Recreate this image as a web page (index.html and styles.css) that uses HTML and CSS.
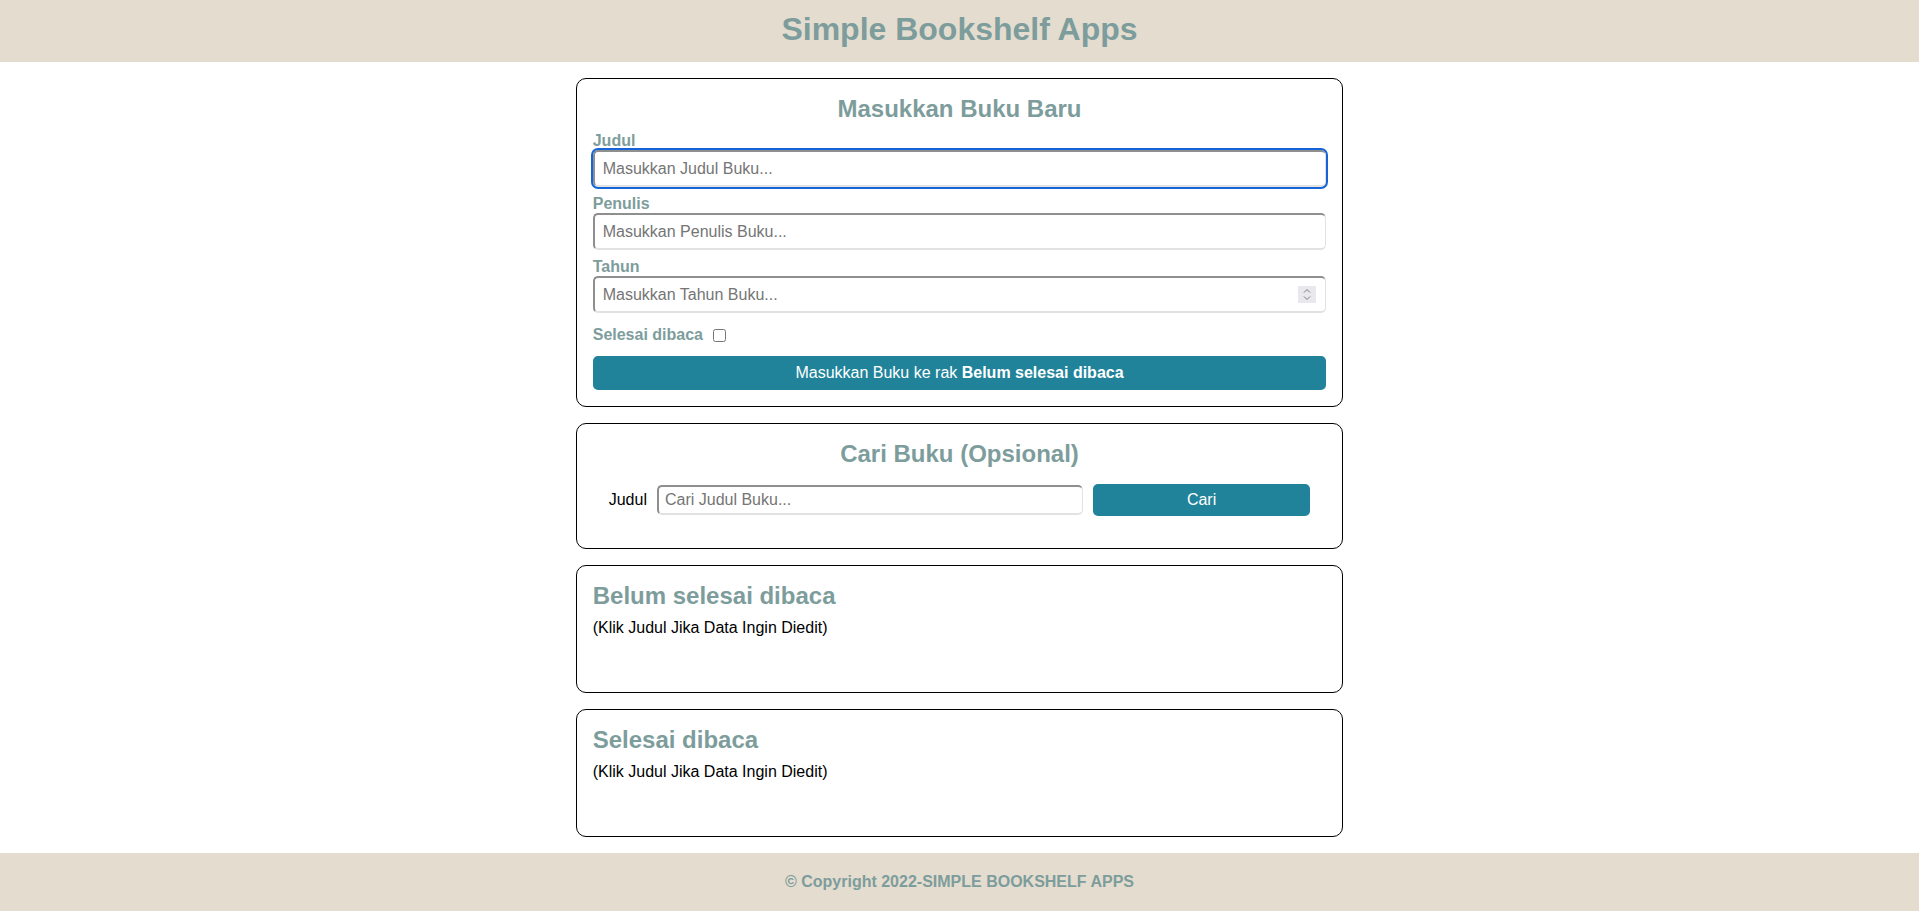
FILE: index.html
```html
<!DOCTYPE html>
<html lang="id">
<head>
<meta charset="utf-8">
<title>Simple Bookshelf Apps</title>
<link rel="stylesheet" href="styles.css">
</head>
<body>
<header class="app-header">
  <h1 class="app-title">Simple Bookshelf Apps</h1>
</header>
<main class="main">
  <section class="card">
    <h2 class="card-title card-title-center">Masukkan Buku Baru</h2>
    <form class="input-form" onsubmit="return false">
      <div class="field">
        <label class="field-label" for="inputJudul">Judul</label>
        <input class="field-input is-focused" id="inputJudul" type="text" placeholder="Masukkan Judul Buku...">
      </div>
      <div class="field">
        <label class="field-label" for="inputPenulis">Penulis</label>
        <input class="field-input" id="inputPenulis" type="text" placeholder="Masukkan Penulis Buku...">
      </div>
      <div class="field">
        <label class="field-label" for="inputTahun">Tahun</label>
        <div class="number-wrap">
          <input class="field-input" id="inputTahun" type="number" placeholder="Masukkan Tahun Buku...">
          <span class="spinner" aria-hidden="true">
            <svg width="18" height="17" viewBox="0 0 18 17">
              <rect width="18" height="17" fill="#e9e9ed"/>
              <path d="M6 6.5 L9 3.5 L12 6.5" fill="none" stroke="#7a7a80" stroke-width="1"/>
              <path d="M6 10.5 L9 13.5 L12 10.5" fill="none" stroke="#7a7a80" stroke-width="1"/>
            </svg>
          </span>
        </div>
      </div>
      <div class="check-row">
        <label class="field-label check-label" for="inputSelesai">Selesai dibaca</label>
        <input class="check-input" id="inputSelesai" type="checkbox">
      </div>
      <button class="btn btn-submit" type="submit">Masukkan Buku ke rak <b>Belum selesai dibaca</b></button>
    </form>
  </section>

  <section class="card">
    <h2 class="card-title card-title-center">Cari Buku (Opsional)</h2>
    <form class="search-form" onsubmit="return false">
      <label class="search-label" for="searchJudul">Judul</label>
      <input class="search-input" id="searchJudul" type="text" placeholder="Cari Judul Buku...">
      <button class="btn btn-search" type="submit">Cari</button>
    </form>
  </section>

  <section class="card">
    <h2 class="card-title">Belum selesai dibaca</h2>
    <p class="shelf-hint">(Klik Judul Jika Data Ingin Diedit)</p>
    <div class="book-list"></div>
  </section>

  <section class="card">
    <h2 class="card-title">Selesai dibaca</h2>
    <p class="shelf-hint">(Klik Judul Jika Data Ingin Diedit)</p>
    <div class="book-list"></div>
  </section>
</main>
<footer class="app-footer">
  <p class="footer-text">© Copyright 2022-SIMPLE BOOKSHELF APPS</p>
</footer>
</body>
</html>
```
FILE: styles.css
```css
* {
  box-sizing: border-box;
}

body {
  margin: 0;
  font-family: "Liberation Sans", Arial, sans-serif;
  font-size: 16px;
  color: #000;
  background: #fff;
}

.app-header {
  background: #e4dccf;
  padding: 11px 0 14px;
}

.app-title {
  margin: 0;
  text-align: center;
  font-size: 32px;
  font-weight: bold;
  color: #7d9d9c;
  line-height: normal;
}

.main {
  display: flex;
  flex-direction: column;
  align-items: center;
  gap: 16px;
  padding: 16px 0;
}

.card {
  width: 40%;
  border: 1px solid #000;
  border-radius: 10px;
  padding: 16px;
}

.card-title {
  margin: 0;
  font-size: 24px;
  font-weight: bold;
  color: #7d9d9c;
  line-height: normal;
}

.card-title-center {
  text-align: center;
}

.input-form {
  margin-top: 9px;
  display: flex;
  flex-direction: column;
}

.field + .field {
  margin-top: 8px;
}

.field-label {
  display: block;
  font-weight: bold;
  color: #7d9d9c;
  line-height: normal;
}

.field-input,
.search-input {
  display: block;
  width: 100%;
  height: 37px;
  padding: 0 8px;
  font-family: "Liberation Sans", Arial, sans-serif;
  font-size: 16px;
  border-width: 2px 1px 2px 2px;
  border-style: solid;
  border-color: #8f8f8f #e2e2e2 #e2e2e2 #8f8f8f;
  border-radius: 5px;
  background: #fff;
  outline: none;
}

.field-input::placeholder,
.search-input::placeholder {
  color: #757575;
}

.is-focused {
  outline: 2px solid #1565d8;
  outline-offset: 0;
}

.number-wrap {
  position: relative;
}

.field-input[type="number"] {
  -moz-appearance: textfield;
}

.field-input[type="number"]::-webkit-inner-spin-button,
.field-input[type="number"]::-webkit-outer-spin-button {
  -webkit-appearance: none;
  margin: 0;
}

.spinner {
  position: absolute;
  right: 10px;
  top: 10px;
  width: 18px;
  height: 17px;
  display: block;
  line-height: 0;
}

.check-row {
  display: flex;
  align-items: center;
  height: 20px;
  margin-top: 12px;
}

.check-label {
  display: inline-block;
}

.check-input {
  width: 13px;
  height: 13px;
  margin: 0 0 0 10px;
}

.btn {
  border: none;
  border-radius: 5px;
  background: #21839a;
  color: #fff;
  font-family: "Liberation Sans", Arial, sans-serif;
  font-size: 16px;
  cursor: pointer;
}

.btn-submit {
  margin-top: 11px;
  height: 34px;
  width: 100%;
}

.search-form {
  display: flex;
  align-items: center;
  gap: 10px;
  padding: 16px;
}

.search-label {
  color: #000;
  flex: none;
}

.search-input {
  flex: 2;
  width: auto;
  min-width: 0;
  height: 30px;
  padding: 0 6px;
}

.btn-search {
  flex: 1;
  height: 32px;
}

.shelf-hint {
  margin: 9px 0 0;
  line-height: normal;
}

.book-list {
  min-height: 39px;
}

.app-footer {
  background: #e4dccf;
  padding: 20px 0;
}

.footer-text {
  margin: 0;
  text-align: center;
  font-weight: bold;
  color: #7d9d9c;
  line-height: normal;
}
```
